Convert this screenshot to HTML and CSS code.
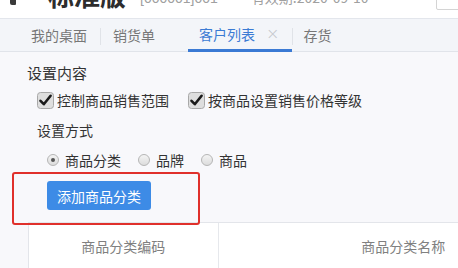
FILE: index.html
```html
<!DOCTYPE html>
<html lang="zh">
<head>
<meta charset="utf-8">
<link rel="stylesheet" href="styles.css">
</head>
<body>
<div class="page">
  <header class="topbar">
    <span class="logo-bit"></span>
    <span class="edition">标准版</span>
    <span class="account">[000001]001</span>
    <span class="expiry">有效期:2020-09-10</span>
    <span class="corner-box"></span>
  </header>
  <nav class="tabs">
    <div class="tab tab-desk">我的桌面</div>
    <div class="tab tab-sales">销货单</div>
    <div class="tab tab-active">客户列表<span class="close">×</span></div>
    <div class="tab tab-stock">存货</div>
  </nav>
  <main class="content">
    <div class="section-title">设置内容</div>
    <div class="check-row">
      <label class="check">
        <svg class="check-box" width="17" height="17" viewBox="0 0 17 17"><rect x="0.5" y="0.5" width="16" height="16" rx="3" fill="#dedede" stroke="#a8a8a8"/><path d="M3.5 8.8 L6.8 12.2 L13.6 3.8" fill="none" stroke="#1a1a1a" stroke-width="2.6" stroke-linecap="round" stroke-linejoin="round"/></svg>
        <span>控制商品销售范围</span>
      </label>
      <label class="check">
        <svg class="check-box" width="17" height="17" viewBox="0 0 17 17"><rect x="0.5" y="0.5" width="16" height="16" rx="3" fill="#dedede" stroke="#a8a8a8"/><path d="M3.5 8.8 L6.8 12.2 L13.6 3.8" fill="none" stroke="#1a1a1a" stroke-width="2.6" stroke-linecap="round" stroke-linejoin="round"/></svg>
        <span>按商品设置销售价格等级</span>
      </label>
    </div>
    <div class="sub-title">设置方式</div>
    <div class="radio-row">
      <label class="radio"><span class="dot checked"></span>商品分类</label>
      <label class="radio"><span class="dot"></span>品牌</label>
      <label class="radio"><span class="dot"></span>商品</label>
    </div>
    <div class="btn-row">
      <button class="btn-add">添加商品分类</button>
    </div>
    <div class="table">
      <div class="th th-code">商品分类编码</div>
      <div class="th th-name">商品分类名称</div>
    </div>
    <div class="highlight"></div>
  </main>
</div>
</body>
</html>
```

FILE: styles.css
```css
* { box-sizing: border-box; }
html, body { margin: 0; padding: 0; }
body {
  width: 458px;
  height: 268px;
  overflow: hidden;
  background: #f8f8fb;
  font-family: "Noto Sans CJK SC", "Liberation Sans", sans-serif;
  color: #333;
}
.page { width: 458px; height: 268px; overflow: hidden; }

.topbar {
  height: 19px;
  background: #fff;
  border-bottom: 1px solid #e3e6ec;
  display: flex;
  align-items: flex-end;
  overflow: hidden;
  position: relative;
}
.logo-bit {
  width: 6px;
  height: 20px;
  margin-left: 10px;
  margin-bottom: 13px;
  background: #3a3a3a;
  border-radius: 0 0 1px 2px;
}
.edition {
  font-size: 26px;
  line-height: 26px;
  font-weight: bold;
  color: #2d2d2d;
  margin-left: 32px;
  margin-bottom: 10px;
}
.account {
  font-family: "Liberation Sans", sans-serif;
  font-size: 14px;
  line-height: 14px;
  color: #a0a0a0;
  margin-left: 14px;
  margin-bottom: 13px;
}
.expiry {
  font-family: "Noto Sans CJK SC", "Liberation Sans", sans-serif;
  font-size: 14px;
  line-height: 14px;
  color: #a0a0a0;
  margin-left: 33px;
  margin-bottom: 14px;
}
.corner-box {
  width: 30px;
  height: 30px;
  margin-left: auto;
  margin-right: -8px;
  margin-bottom: 8px;
  border: 1px solid #d4d4d4;
  border-radius: 2px;
  background: #fff;
}

.tabs {
  height: 33px;
  background: #f3f5f9;
  border-bottom: 1px solid #e1e4ea;
  display: flex;
  align-items: stretch;
  padding-left: 19px;
}
.tab {
  font-size: 14px;
  color: #777;
  display: flex;
  align-items: center;
  position: relative;
  padding-bottom: 1px;
}
.tab-desk {
  padding: 0 14px 1px 12px;
}
.tab-desk::after {
  content: "";
  position: absolute;
  right: 0;
  top: 9px;
  bottom: 6px;
  width: 1px;
  background: #e0e3e8;
}
.tab-sales { padding: 0 33px 1px 12px; }
.tab-active {
  color: #3b7bd4;
  padding: 0 13px 1px 11px;
  border-bottom: 3px solid #3b7ad4;
  margin-bottom: -1px;
}
.tab-active::after {
  content: "";
  position: absolute;
  right: -1px;
  top: 9px;
  bottom: 4px;
  width: 1px;
  background: #e0e3e8;
}
.close {
  color: #c4c7cc;
  font-size: 16px;
  margin-left: 11px;
  font-family: "DejaVu Sans", sans-serif;
  font-weight: 300;
}
.tab-stock { padding: 0 12px 1px 11px; }

.content {
  position: relative;
  padding-left: 27px;
  padding-top: 11px;
}
.section-title {
  font-size: 15px;
  line-height: 20px;
  color: #333;
}
.check-row {
  display: flex;
  align-items: center;
  height: 20px;
  margin-top: 7px;
  padding-left: 10px;
}
.check {
  display: flex;
  align-items: center;
  font-size: 14px;
  color: #333;
}
.check + .check { margin-left: 19px; }
.check-box { margin-right: 3px; flex: none; }

.sub-title {
  font-size: 14px;
  line-height: 20px;
  margin-top: 10px;
  padding-left: 10px;
  color: #333;
}
.radio-row {
  display: flex;
  align-items: center;
  height: 20px;
  margin-top: 10px;
  padding-left: 20px;
}
.radio {
  display: flex;
  align-items: center;
  font-size: 14px;
  color: #333;
  margin-right: 17px;
}
.dot {
  width: 12px;
  height: 12px;
  border-radius: 50%;
  border: 1px solid #b5b5b5;
  background: linear-gradient(#f4f4f4, #dcdcdc);
  margin-right: 6px;
  position: relative;
  flex: none;
}
.dot.checked::after {
  content: "";
  position: absolute;
  left: 3px;
  top: 3px;
  width: 4px;
  height: 4px;
  border-radius: 50%;
  background: #555;
}
.btn-row {
  margin-top: 11px;
  padding-left: 20px;
  height: 29px;
}
.btn-add {
  height: 29px;
  width: 104px;
  border: none;
  border-radius: 3px;
  background: #3d8be6;
  color: #fff;
  font-family: "Noto Sans CJK SC", sans-serif;
  font-size: 14px;
  padding: 0;
}
.table {
  margin-top: 12px;
  margin-left: 1px;
  width: 560px;
  height: 60px;
  background: #fff;
  border-top: 1px solid #e3e5ea;
  border-left: 1px solid #e3e5ea;
  display: flex;
}
.th {
  height: 46px;
  display: flex;
  align-items: center;
  justify-content: center;
  font-size: 14px;
  color: #808080;
}
.th-code { width: 190px; border-right: 1px solid #e6e8ec; }
.th-name { width: 370px; }

.highlight {
  position: absolute;
  left: 12px;
  top: 120px;
  width: 188px;
  height: 53px;
  border: 2px solid #e0302b;
  border-radius: 3px;
}
```
